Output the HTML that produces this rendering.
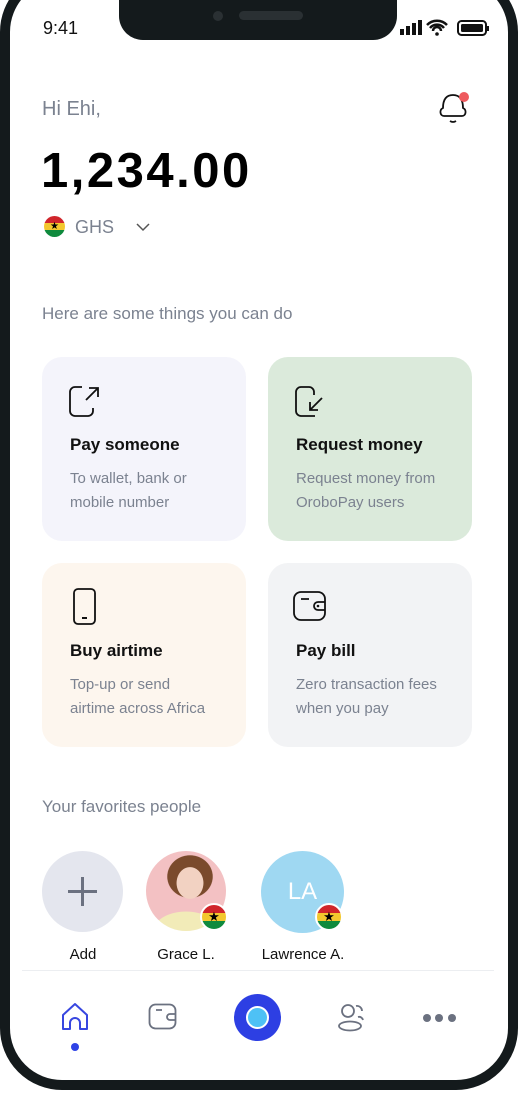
<!DOCTYPE html>
<html><head><meta charset="utf-8"><style>
*{margin:0;padding:0;box-sizing:border-box}
body{width:518px;height:1093px;background:#fff;font-family:"Liberation Sans",sans-serif;position:relative;overflow:hidden}
.frame{position:absolute;left:0;top:-30px;width:518px;height:1120px;border:10px solid #141a1c;border-radius:62px;background:#fff}
.notch{position:absolute;left:119px;top:0;width:278px;height:40px;background:#141a1c;border-radius:0 0 24px 24px}
.abs{position:absolute}
.card{position:absolute;width:204px;height:184px;border-radius:20px}
.card h3{position:absolute;left:28px;top:78px;font-size:17px;font-weight:bold;color:#111}
.card p{position:absolute;left:28px;top:110px;font-size:15px;line-height:24px;color:#7b8290}
.flag{position:absolute;border-radius:50%;overflow:hidden;background:linear-gradient(#d0252b 0 33%,#f3c72e 33% 66%,#0f8a3d 66%)}
.flag span{position:absolute;left:0;right:0;top:50%;transform:translateY(-52%);text-align:center;color:#000;line-height:1}
.name{position:absolute;top:946px;font-size:15px;color:#111;text-align:center;width:120px}
</style></head><body>
<div class="frame"></div>
<div class="notch"></div>
<div class="abs" style="left:213px;top:11px;width:10px;height:10px;border-radius:50%;background:#2a3033"></div>
<div class="abs" style="left:239px;top:11px;width:64px;height:9px;border-radius:5px;background:#2a3033"></div>
<div class="abs" style="left:43px;top:18px;font-size:18px;color:#111">9:41</div>
<svg class="abs" style="left:399px;top:18px" width="90" height="20" viewBox="0 0 90 20">
<rect x="1" y="11" width="4" height="6" fill="#111"/><rect x="7" y="8" width="4" height="9" fill="#111"/><rect x="13" y="5" width="4" height="12" fill="#111"/><rect x="19" y="2" width="4" height="15" fill="#111"/>
<path d="M28 7a14 14 0 0 1 20 0M31 10a9 9 0 0 1 14 0M34 13a4 4 0 0 1 8 0" stroke="#111" stroke-width="2.5" fill="none"/><circle cx="38" cy="16" r="1.8" fill="#111"/>
<rect x="59" y="3" width="28" height="14" rx="3.5" fill="none" stroke="#111" stroke-width="2"/><rect x="62" y="6" width="22" height="8" rx="1.5" fill="#111"/><rect x="88" y="8" width="2" height="5" fill="#111"/>
</svg>
<div class="abs" style="left:42px;top:98px;font-size:20px;color:#7b8290">Hi Ehi,</div>
<svg class="abs" style="left:436px;top:88px" width="36" height="40" viewBox="0 0 36 40">
<path d="M8 28 C4 28 3 22 7 20 C7 12 10 7 17 7 C24 7 27 12 27 20 C31 22 30 28 26 28 Z" fill="none" stroke="#111" stroke-width="1.8"/>
<path d="M14 33 Q17 35 20 33" fill="none" stroke="#111" stroke-width="1.8"/>
<circle cx="28" cy="9" r="5" fill="#ee5a5e"/></svg>
<div class="abs" style="left:41px;top:143px;font-size:49px;font-weight:bold;color:#000;letter-spacing:2.5px">1,234.00</div>
<div class="flag" style="left:44px;top:216px;width:21px;height:21px"><span style="font-size:10px">★</span></div>
<div class="abs" style="left:75px;top:217px;font-size:18px;color:#7b8290">GHS</div>
<svg class="abs" style="left:135px;top:222px" width="16" height="10"><path d="M2 2l6 6 6-6" stroke="#555" stroke-width="1.5" fill="none"/></svg>
<div class="abs" style="left:42px;top:304px;font-size:17px;color:#7b8290">Here are some things you can do</div>

<div class="card" style="left:42px;top:357px;background:#f4f4fb">
<svg class="abs" style="left:26px;top:28px" width="34" height="34" viewBox="0 0 34 34"><path d="M14 2H7a5 5 0 0 0-5 5v19a5 5 0 0 0 5 5h13a5 5 0 0 0 5-5v-3" fill="none" stroke="#111" stroke-width="1.8"/><path d="M18 15L30 3M21 3h9v9" fill="none" stroke="#111" stroke-width="1.8"/></svg>
<h3>Pay someone</h3><p>To wallet, bank or<br>mobile number</p></div>
<div class="card" style="left:268px;top:357px;background:#dbeadb">
<svg class="abs" style="left:26px;top:28px" width="34" height="34" viewBox="0 0 34 34"><path d="M20 10V7a5 5 0 0 0-5-5H7a5 5 0 0 0-5 5v19a5 5 0 0 0 5 5h14" fill="none" stroke="#111" stroke-width="1.8"/><path d="M28 13L16 25M16 17v8h8" fill="none" stroke="#111" stroke-width="1.8"/></svg>
<h3>Request money</h3><p>Request money from<br>OroboPay users</p></div>
<div class="card" style="left:42px;top:563px;background:#fdf6ee">
<svg class="abs" style="left:30px;top:24px" width="26" height="40" viewBox="0 0 26 40"><rect x="2" y="2" width="21" height="35" rx="4" fill="none" stroke="#111" stroke-width="1.8"/><rect x="10" y="30" width="5" height="2" fill="#111"/></svg>
<h3>Buy airtime</h3><p>Top-up or send<br>airtime across Africa</p></div>
<div class="card" style="left:268px;top:563px;background:#f2f3f5">
<svg class="abs" style="left:24px;top:27px" width="36" height="34" viewBox="0 0 36 34"><rect x="2" y="2" width="31" height="28" rx="7" fill="none" stroke="#111" stroke-width="1.8"/><path d="M9 9h8M33 12h-7a4 4 0 0 0 0 8h7" fill="none" stroke="#111" stroke-width="1.8"/><circle cx="26" cy="16" r="1.3" fill="#111"/></svg>
<h3>Pay bill</h3><p>Zero transaction fees<br>when you pay</p></div>

<div class="abs" style="left:42px;top:797px;font-size:17px;color:#7b8290">Your favorites people</div>
<div class="abs" style="left:42px;top:851px;width:81px;height:81px;border-radius:50%;background:#e4e6ee"></div>
<div class="abs" style="left:68px;top:890px;width:29px;height:2.5px;background:#6b7180"></div>
<div class="abs" style="left:81px;top:877px;width:2.5px;height:29px;background:#6b7180"></div>
<div class="abs" style="left:146px;top:851px;width:80px;height:80px;border-radius:50%;overflow:hidden;background:radial-gradient(ellipse 22px 26px at 55% 40%,#f2d2c2 60%,transparent 62%),radial-gradient(ellipse 32px 30px at 55% 32%,#7a4a2c 70%,transparent 72%),radial-gradient(ellipse 40px 24px at 50% 100%,#f2ebb8 80%,transparent 82%),#f3c1c3"></div>
<div class="flag" style="left:200px;top:903px;width:28px;height:28px;border:2px solid #fff"><span style="font-size:13px">★</span></div>
<div class="abs" style="left:261px;top:851px;width:83px;height:82px;border-radius:50%;background:#9fd8f2;color:#fff;font-size:24px;text-align:center;line-height:82px">LA</div>
<div class="flag" style="left:315px;top:903px;width:28px;height:28px;border:2px solid #fff"><span style="font-size:13px">★</span></div>
<div class="name" style="left:23px">Add</div>
<div class="name" style="left:126px">Grace L.</div>
<div class="name" style="left:243px">Lawrence A.</div>
<div class="abs" style="left:22px;top:970px;width:472px;height:1px;background:#eceef1"></div>

<svg class="abs" style="left:60px;top:1001px" width="32" height="32" viewBox="0 0 32 32"><path d="M3 28V14L15 3l12 11v14h-7v-6a5 5 0 0 0-10 0v6Z" fill="none" stroke="#3847e0" stroke-width="2" stroke-linejoin="round"/></svg>
<div class="abs" style="left:71px;top:1043px;width:8px;height:8px;border-radius:50%;background:#2f43e6"></div>
<svg class="abs" style="left:148px;top:1003px" width="30" height="28" viewBox="0 0 30 28"><rect x="1.5" y="1.5" width="26" height="24" rx="6" fill="none" stroke="#6b7180" stroke-width="1.8"/><path d="M8 7h6M27 11h-5a3 3 0 0 0 0 6h5" fill="none" stroke="#6b7180" stroke-width="1.8"/></svg>
<div class="abs" style="left:234px;top:994px;width:47px;height:47px;border-radius:50%;background:#2d3fe3"></div>
<div class="abs" style="left:246px;top:1006px;width:23px;height:23px;border-radius:50%;background:#4ec1f5;border:2px solid #fff"></div>
<svg class="abs" style="left:336px;top:1003px" width="32" height="30" viewBox="0 0 32 30"><circle cx="12" cy="8" r="6" fill="none" stroke="#6b7180" stroke-width="1.8"/><path d="M20 3a5 5 0 0 1 6 5M22 14a4 4 0 0 1 5 3" fill="none" stroke="#6b7180" stroke-width="1.8"/><ellipse cx="14" cy="23" rx="11" ry="4.5" fill="none" stroke="#6b7180" stroke-width="1.8"/></svg>
<div class="abs" style="left:423px;top:1014px;width:8px;height:8px;border-radius:50%;background:#6b7180"></div>
<div class="abs" style="left:435px;top:1014px;width:8px;height:8px;border-radius:50%;background:#6b7180"></div>
<div class="abs" style="left:448px;top:1014px;width:8px;height:8px;border-radius:50%;background:#6b7180"></div>
</body></html>
